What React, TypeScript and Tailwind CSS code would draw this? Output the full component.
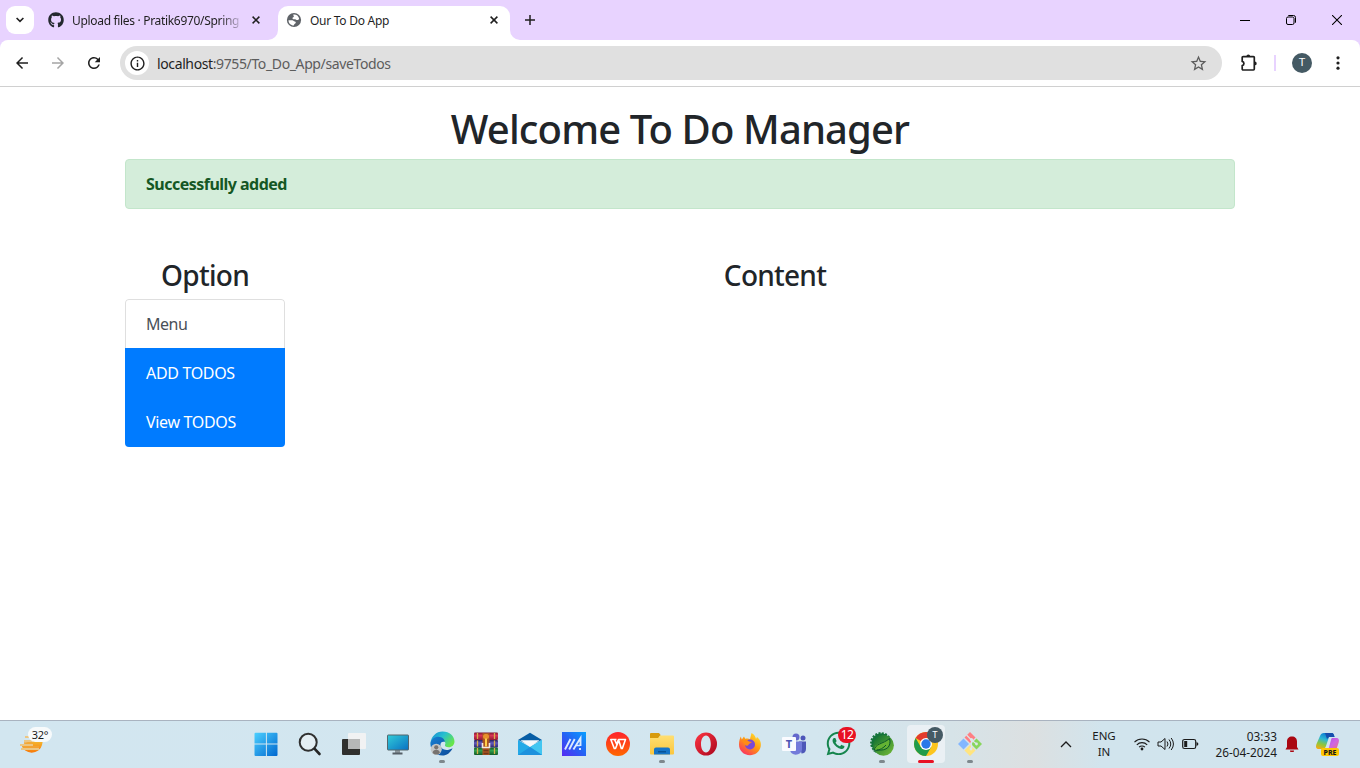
import React from "react";
import { MdArrowBack, MdArrowForward, MdRefresh, MdInfoOutline, MdStarBorder } from "react-icons/md";
import { FaGithub, FaWhatsapp } from "react-icons/fa";

function CloseMark() {
  return (
    <svg width="8" height="8" viewBox="0 0 8 8" className="shrink-0">
      <path d="M.6.6l6.8 6.8M7.4.6L.6 7.4" stroke="#1f1f1f" strokeWidth="1.5" />
    </svg>
  );
}

function TabStrip() {
  return (
    <div className="flex h-10 items-start bg-[#e8d3ff]">
      <div className="ml-1.5 mt-1.5 flex h-7 w-7 items-center justify-center rounded-[9px] bg-white">
        <svg width="8" height="6" viewBox="0 0 8 6">
          <path d="M.6 1L4 4.4 7.4 1" fill="none" stroke="#1f1f1f" strokeWidth="1.6" />
        </svg>
      </div>
      <div className="ml-[14px] flex h-10 w-[213px] items-center">
        <FaGithub size={16} color="#24292f" className="shrink-0" />
        <span className="ml-2 mt-px w-[171px] shrink-0 whitespace-nowrap text-[12px] tracking-[-0.32px] text-[#1f1f1f] [mask-image:linear-gradient(to_right,black_148px,transparent_172px)]">
          Upload files · Pratik6970/Spring
        </span>
        <span className="ml-[9px] flex"><CloseMark /></span>
      </div>
      <svg width="10" height="40" viewBox="0 0 10 40" className="ml-[7px] shrink-0">
        <path d="M0 40A10 10 0 0 0 10 30V40Z" fill="#fff" />
      </svg>
      <div className="mt-1.5 flex h-[34px] w-[232px] items-center rounded-t-[10px] bg-white pb-1.5 pl-2">
        <svg width="16" height="16" viewBox="0 0 16 16" className="shrink-0">
          <circle cx="8" cy="8" r="7.1" fill="#5f6368" />
          <path d="M7.300 2.600c2.700-.5 5.300 1.200 5.800 4-.2 1-.8 1.600-1.800 1.500-1 .1-1.300-.6-2.100-.9-.9-.2-2.500.2-2.700-.8-.2-.8.6-1.100 1.200-1.500.6-.5-.7-1.400-.4-2.300ZM2.500 8.200h3.800c1.300.1 1.500 1.200 2.500 1.400 1.200.2 1.300 1.200.5 1.800-.6.500-1.400.7-1.500 2.100C4.800 13.400 2.400 11 2.500 8.200Z" fill="#fff" />
        </svg>
        <span className="ml-2 mt-[2px] w-[180px] whitespace-nowrap text-[12px] tracking-[-0.27px] text-[#1f1f1f]">Our To Do App</span>
        <CloseMark />
      </div>
      <svg width="10" height="40" viewBox="0 0 10 40" className="shrink-0">
        <path d="M10 40A10 10 0 0 1 0 30V40Z" fill="#fff" />
      </svg>
      <svg width="10" height="10" viewBox="0 0 10 10" className="ml-[5px] mt-[15px]">
        <path d="M5 0v10M0 5h10" stroke="#1f1f1f" strokeWidth="1.5" />
      </svg>
      <div className="ml-auto flex h-10 items-center gap-[36px] pr-[18px]">
        <svg width="10" height="10" viewBox="0 0 10 10"><path d="M0 5.5h10" stroke="#000" /></svg>
        <svg width="10" height="10" viewBox="0 0 10 10">
          <rect x=".5" y="2" width="7.5" height="7.5" rx="1.5" fill="none" stroke="#000" />
          <path d="M2.3.5H7.5a2 2 0 0 1 2 2V7.7" fill="none" stroke="#000" />
        </svg>
        <svg width="10" height="10" viewBox="0 0 10 10"><path d="M0 0l10 10M10 0L0 10" stroke="#000" strokeWidth="1.05" /></svg>
      </div>
    </div>
  );
}

function Toolbar() {
  return (
    <div className="bg-[#e8d3ff]">
      <div className="flex h-[47px] items-center rounded-t-[8px] border-b border-[#d0d0d0] bg-white">
        <MdArrowBack size={18} color="#1f1f1f" className="ml-[13px]" />
        <MdArrowForward size={18} color="#a5a5a5" className="ml-[18px]" />
        <MdRefresh size={18} color="#1f1f1f" className="ml-[18px]" />
        <div className="ml-[17px] flex h-[34px] w-[1102px] items-center rounded-full bg-[#e0e0e0] pl-[5px]">
          <div className="flex h-6 w-6 items-center justify-center rounded-full bg-white">
            <MdInfoOutline size={17} color="#1f1f1f" />
          </div>
          <span className="ml-2 whitespace-nowrap text-[14px] tracking-[-0.38px] text-[#5c5c5c]">
            <span className="text-[#1f1f1f]">localhost</span>:9755/To_Do_App/saveTodos
          </span>
          <MdStarBorder size={19} color="#5c5c5c" className="ml-auto mr-[14px]" />
        </div>
        <svg width="18" height="18" viewBox="0 0 18 18" className="ml-[18px]">
          <path d="M2.2 3.600a.9.9 0 0 1 .9-.9H13.400a.9.9 0 0 1 .9.9V15.100a.9.9 0 0 1-.9.9H3.100a.9.9 0 0 1-.9-.9V11.600a2.200 2.200 0 0 0 0-4.300Z" fill="none" stroke="#1f1f1f" strokeWidth="1.7" />
          <path d="M6.400 2.400a1.900 1.900 0 0 1 3.800 0ZM14.800 7.500a1.900 1.900 0 0 1 0 3.800Z" fill="#1f1f1f" />
        </svg>
        <div className="ml-[16px] h-4 w-[2px] bg-[#e8d3ff]" />
        <div className="ml-4 flex h-5 w-5 items-center justify-center rounded-full bg-[#455a64] pt-px font-['Roboto',sans-serif] text-[11px] text-white">T</div>
        <svg width="4" height="14" viewBox="0 0 4 14" className="ml-[24px]">
          <circle cx="2" cy="1.8" r="1.6" fill="#1f1f1f" />
          <circle cx="2" cy="7" r="1.6" fill="#1f1f1f" />
          <circle cx="2" cy="12.2" r="1.6" fill="#1f1f1f" />
        </svg>
      </div>
    </div>
  );
}

function Content() {
  return (
    <main className="mx-auto w-[1110px] grow pt-4 text-[16px] leading-6 text-[#212529]">
      <h1 className="whitespace-nowrap pb-1.5 pt-[2px] text-center text-[40px] font-medium leading-[48px] tracking-[-0.88px]">Welcome To Do Manager</h1>
      <div className="h-[50px] rounded-[4px] border border-[#c3e6cb] bg-[#d4edda] px-5 py-3 text-[#155724]">
        <b className="tracking-[-0.52px]">Successfully added</b>
      </div>
      <div className="mt-12 flex gap-[30px]">
        <div className="w-40">
          <h3 className="pb-[7px] pt-px text-center text-[28px] font-medium leading-[34px] tracking-[-0.7px]">Option</h3>
          <div className="overflow-hidden rounded-[4px]">
            <div className="h-[49px] rounded-t-[4px] border border-b-0 border-[#dfdfdf] px-5 py-3 tracking-[-0.5px] text-[#495057]">Menu</div>
            <div className="h-[49px] bg-[#007bff] px-[21px] py-[13px] tracking-[-0.33px] text-white">ADD TODOS</div>
            <div className="h-[50px] bg-[#007bff] px-[21px] py-[13px] tracking-[-0.33px] text-white">View TODOS</div>
          </div>
        </div>
        <div className="grow">
          <h3 className="pt-px text-center text-[28px] font-medium leading-[34px] tracking-[-0.75px]">Content</h3>
        </div>
      </div>
    </main>
  );
}

const windows = (
  <svg width="24" height="24" viewBox="0 0 24 24">
    <defs><linearGradient id="win" x2="1" y2="1"><stop stopColor="#4cd0ff" /><stop offset="1" stopColor="#0067cf" /></linearGradient></defs>
    <path d="M1.5.8H11.9V11.6H.5V1.8a1 1 0 0 1 1-1ZM12.9.8H22.5a1 1 0 0 1 1 1V11.6H12.9ZM.5 12.6H11.9V24H1.5a1 1 0 0 1-1-1ZM12.9 12.6H23.5V23a1 1 0 0 1-1 1H12.9Z" fill="url(#win)" />
  </svg>
);
const search = (
  <svg width="24" height="24" viewBox="0 0 24 24">
    <circle cx="10.2" cy="10.300" r="8.5" fill="#e4eef3" stroke="#303030" strokeWidth="2" />
    <path d="M16.700 16.800L21.500 22" stroke="#252525" strokeWidth="2.6" strokeLinecap="round" />
  </svg>
);
const taskView = (
  <svg width="24" height="24" viewBox="0 0 24 24">
    <rect x="0" y="7" width="18" height="16" rx="1" fill="#30302e" />
    <rect x="6" y="1" width="18" height="16" rx="1" fill="#f1f2f3" />
    <path d="M6 7h12v10H6Z" fill="#b6b7b7" />
  </svg>
);
const monitor = (
  <svg width="24" height="24" viewBox="0 0 24 24">
    <defs><linearGradient id="mon" x2="1" y2="1"><stop stopColor="#32ccd8" /><stop offset="1" stopColor="#0870c3" /></linearGradient></defs>
    <path d="M9 18h5v3H9Z" fill="#8c969c" /><path d="M6.5 20.5h10v2h-10Z" fill="#555f67" />
    <rect x="1.5" y="3" width="21" height="15" rx=".6" fill="url(#mon)" stroke="#55666d" />
  </svg>
);
const edge = (
  <svg width="25" height="25" viewBox="0 0 24 24">
    <defs>
      <linearGradient id="e1" x2="1" y2=".6"><stop stopColor="#1686d5" /><stop offset=".5" stopColor="#27bfd0" /><stop offset="1" stopColor="#68e64b" /></linearGradient>
      <linearGradient id="e2" x2="1" y2="1"><stop stopColor="#167fd3" /><stop offset="1" stopColor="#0c4a99" /></linearGradient>
    </defs>
    <path d="M.5 11C1.500 5 6 .5 12 .5c7 0 11.500 4.500 11.500 9.500 0 3.300-2.300 5.500-5.700 5.500-2.400 0-3.900-.9-3.400-2.200.8-1.400.3-2.600-.6-3.500C11.800 7.700 9.500 7.500 7.500 8 4.500 8.700 2 10.500.700 13.500Z" fill="url(#e1)" />
    <path d="M.5 12c.4-4 4-6.500 7.500-6.500 3.900 0 6.400 2.700 6.200 5-2.500-.7-4.200.5-4.200 3 0 4 5.500 6.500 11.700 3C19.500 21 16 23.500 12 23.500 5 23.500 0 18 .5 12Z" fill="url(#e2)" />
    <circle cx="6" cy="17.500" r="5.300" fill="#c3c6c7" /><circle cx="6" cy="15.700" r="2" fill="#77736f" /><path d="M2.500 20.800c.2-3.700 6.800-3.700 7 0-1.700 2.400-5.300 2.400-7 0Z" fill="#77736f" />
  </svg>
);
const archive = (
  <svg width="24" height="24" viewBox="0 0 24 24">
    <defs>
      <linearGradient id="bk1" x2="0" y2="1"><stop stopColor="#7d1530" /><stop offset=".4" stopColor="#d93454" /><stop offset="1" stopColor="#8d1935" /></linearGradient>
      <linearGradient id="bk2" x2="0" y2="1"><stop stopColor="#25205e" /><stop offset=".4" stopColor="#625bc0" /><stop offset="1" stopColor="#2b266f" /></linearGradient>
      <linearGradient id="bk3" x2="0" y2="1"><stop stopColor="#10562a" /><stop offset=".4" stopColor="#2fa04c" /><stop offset="1" stopColor="#135b29" /></linearGradient>
    </defs>
    <rect x="0" y=".5" width="24" height="7.500" rx="1" fill="url(#bk1)" />
    <rect x="0" y="8" width="24" height="7.500" rx="1" fill="url(#bk2)" />
    <rect x="0" y="15.500" width="24" height="7.500" rx="1" fill="url(#bk3)" />
    <path d="M3.500 1v22M20.500 1v22" stroke="#d9b04a" strokeWidth="1.300" strokeDasharray="6 1.500" />
    <path d="M8.500 1h7v22h-7Z" fill="#a85520" />
    <rect x="9" y="2" width="6" height="5" rx="2.500" fill="#e8902c" />
    <path d="M8.500 11v4.500h7V11" fill="none" stroke="#f3e8e0" strokeWidth="1.600" />
    <path d="M12 6.500v8" stroke="#ffcf4a" strokeWidth="2" /><path d="M9.500 18.500h5M9.500 21.500h5" stroke="#70371d" strokeWidth="1.300" />
  </svg>
);
const mail = (
  <svg width="24" height="24" viewBox="0 0 24 24">
    <path d="M0 8L12 .8 24 8 12 13Z" fill="#075da5" />
    <path d="M0 8l12 7 12-7v15H0Z" fill="#24a9e7" /><path d="M12 15L24 8v15Z" fill="#43c6f1" /><path d="M0 23l12-8 12 8Z" fill="#1d91dd" />
    <path d="M2.500 8.300h19L12 14.800Z" fill="#f5f8fb" />
  </svg>
);
const msiApp = (
  <svg width="24" height="24" viewBox="0 0 24 24">
    <defs><linearGradient id="ms" y1="1" x2="1" y2="0"><stop stopColor="#562af3" /><stop offset=".5" stopColor="#2562f4" /><stop offset="1" stopColor="#079fff" /></linearGradient></defs>
    <path d="M0 0h24v24H0Z" fill="url(#ms)" />
    <path d="M3 17.500L8.500 7M7.200 17.500L12.700 7M11.400 17.500L18.500 6V14" fill="none" stroke="#dbeaff" strokeWidth="1.900" /><path d="M14 13.500h4" stroke="#dbeaff" strokeWidth="1.500" /><circle cx="18" cy="17" r="1.100" fill="#fff" />
  </svg>
);
const wps = (
  <svg width="24" height="24" viewBox="0 0 24 24">
    <defs><linearGradient id="wp" x2="0" y2="1"><stop stopColor="#ff242c" /><stop offset="1" stopColor="#ff6700" /></linearGradient></defs>
    <circle cx="12" cy="12" r="12" fill="url(#wp)" />
    <path d="M10.500 7.500H4.800L8.300 16.500H9.500L12.800 8.500 15.300 16.500H16.300L19.500 7.500H12.500L11 11M8.500 7.500L11 13" fill="none" stroke="#fff" strokeWidth="1.600" strokeLinejoin="round" />
  </svg>
);
const folder = (
  <svg width="24" height="24" viewBox="0 0 24 24">
    <defs><linearGradient id="fo" x2="0" y2="1"><stop stopColor="#ffdf72" /><stop offset="1" stopColor="#fbc63d" /></linearGradient></defs>
    <path d="M0 2a1 1 0 0 1 1-1h8l2 2.500H10L8 7H0Z" fill="#d79b0e" />
    <path d="M0 6h8l2.500-2.500H23a1 1 0 0 1 1 1V21.500a1 1 0 0 1-1 1H1a1 1 0 0 1-1-1Z" fill="url(#fo)" />
    <path d="M4 22.500V17.500a2 2 0 0 1 2-2H18a2 2 0 0 1 2 2V22.500Z" fill="#1675c7" /><path d="M8 19h8v1.500H8Z" fill="#075397" />
  </svg>
);
const opera = (
  <svg width="24" height="24" viewBox="0 0 24 24">
    <defs><linearGradient id="op" x2="1" y2="1"><stop stopColor="#ff3542" /><stop offset="1" stopColor="#a8061d" /></linearGradient></defs>
    <path fillRule="evenodd" d="M12 .500a11 11.500 0 1 0 0 23 11 11.500 0 1 0 0-23ZM12 3.500c3 0 4.800 3.800 4.800 8.500S15 20.500 12 20.500 7 16.700 7 12s2-8.500 5-8.500Z" fill="url(#op)" />
  </svg>
);
const firefox = (
  <svg width="24" height="24" viewBox="0 0 24 24">
    <defs><linearGradient id="ff" x1=".9" x2=".2" y2="1"><stop stopColor="#ffe735" /><stop offset=".5" stopColor="#ff980f" /><stop offset="1" stopColor="#fb2b67" /></linearGradient></defs>
    <path d="M2.800 4.500l1 3L6 4.500l1.200 2.300c2-.5 3.300-.4 4.800.3L13.500 1c3 1.700 4 3.800 4.500 6l1-2c3 2.300 4.500 6 3.700 9.500C21.500 20 17 23.200 12 23.200 5.500 23.200 1 18.500 1 12.500 1 9 2 6 2.800 4.500Z" fill="url(#ff)" />
    <circle cx="12" cy="12.500" r="5" fill="#7949d5" /><path d="M4 9c3-2 5-1.200 7 .5l3 .5-3 2c-1 2.600-4 2-4.500 0" fill="#ff8b16" />
  </svg>
);
const teams = (
  <svg width="24" height="24" viewBox="0 0 24 24">
    <circle cx="14" cy="5" r="3.500" fill="#6568cc" /><circle cx="21" cy="6" r="2.500" fill="#4d55b9" />
    <path d="M17 9.500h7v7.500c0 3-2.200 4.500-4.500 4.500Z" fill="#4e58b8" /><path d="M8 9.500h12V17c0 7-12 8-12 0Z" fill="#737bda" />
    <rect y="5" width="14" height="14" rx="1" fill="#fafbff" /><text x="7" y="16" textAnchor="middle" fontSize="11" fontWeight="700" fill="#4e55b4">T</text>
  </svg>
);
const whatsapp = <FaWhatsapp size={27} color="#15854d" />;
const spring = (
  <svg width="24" height="24" viewBox="0 0 24 24">
    <defs><linearGradient id="sp" x2="1" y2="1"><stop stopColor="#096b31" /><stop offset="1" stopColor="#77bd37" /></linearGradient></defs>
    <circle cx="11" cy="11" r="9.700" fill="#15743a" stroke="#15743a" strokeWidth="2.400" strokeDasharray="2 1.300" />
    <circle cx="13.500" cy="13.300" r="10.400" fill="url(#sp)" />
    <path d="M4.500 17C4 11 13 12 19.500 6.500c2 8-2.500 12.500-13 11.500Z" fill="#63b233" />
    <path d="M4 19.500C4.500 11 13 12.500 19.500 6.500c2 8-2.500 12.500-12.500 11.500M5.500 18.500c4.500-.5 8-2.500 10.500-5.500" fill="none" stroke="#0b5a2b" strokeWidth="1" />
  </svg>
);
const chrome = (
  <svg width="24" height="24" viewBox="0 0 24 24">
    <circle cx="12" cy="12" r="12" fill="#fcc51e" />
    <path d="M12 12L1.610 6A12 12 0 0 1 22.390 6H12Z" fill="#e33b2e" />
    <path d="M1.610 6A12 12 0 0 0 12 24L17.200 15H6.800Z" fill="#219b4a" />
    <circle cx="12" cy="12" r="6" fill="#fff" /><circle cx="12" cy="12" r="4.700" fill="#2878e8" />
  </svg>
);
const git = (
  <svg width="24" height="24" viewBox="0 0 24 24">
    <path d="M12 0l5.500 5.500L12 11 6.500 5.500Z" fill="#ff7f83" /><path d="M18.500 6.500L24 12l-5.500 5.500L13 12Z" fill="#88d65c" />
    <path d="M12 13l5.500 5.500L12 24l-5.500-5.500Z" fill="#ffe47f" /><path d="M5.500 6.500L11 12l-5.500 5.500L0 12Z" fill="#83b7ff" />
    <path d="M8.500 3l5 5v9M13.500 8l5 4" fill="none" stroke="#dce7eb" strokeWidth="1.200" /><circle cx="13.500" cy="7.500" r="1.600" fill="#dce7eb" /><circle cx="18.500" cy="12" r="1.400" fill="#dce7eb" /><circle cx="13" cy="17" r="1.400" fill="#dce7eb" />
  </svg>
);

type App = { name: string; icon: React.ReactNode; open?: boolean; active?: boolean; badge?: React.ReactNode };
const apps: App[] = [
  { name: "start", icon: windows },
  { name: "search", icon: search },
  { name: "views", icon: taskView },
  { name: "monitor", icon: monitor },
  { name: "edge", icon: edge, open: true },
  { name: "archive", icon: archive },
  { name: "mail", icon: mail },
  { name: "msi", icon: msiApp },
  { name: "wps", icon: wps },
  { name: "folder", icon: folder, open: true },
  { name: "opera", icon: opera },
  { name: "firefox", icon: firefox },
  { name: "teams", icon: teams },
  { name: "whatsapp", icon: whatsapp, badge: <span className="absolute left-[22px] top-[6px] flex h-4 w-[18px] items-center justify-center rounded-full bg-[#e81123] text-[12px] leading-none tracking-[-0.5px] text-white">12</span> },
  { name: "spring", icon: spring, open: true },
  { name: "chrome", icon: chrome, active: true, badge: <span className="absolute left-[23px] top-[6px] flex h-4 w-4 items-center justify-center rounded-full bg-[#455a64] pt-px font-['Roboto',sans-serif] text-[9px] text-white">T</span> },
  { name: "git", icon: git, open: true },
];

function Taskbar() {
  return (
    <footer className="flex h-12 items-stretch border-t border-[#a9b3c0] bg-[linear-gradient(90deg,#d2e6f0_0%,#d3e6ef_60%,#d6e3e8_70%,#dce0e1_76%,#d1e4ed_81%,#d1e4ee_100%)] text-[#1b1b1b]">
      <div className="relative ml-5 mt-[6px] h-8 w-8">
        <svg width="32" height="30" viewBox="0 0 32 30">
          <defs><linearGradient id="sun" x2="0" y2="1"><stop stopColor="#f4bd32" /><stop offset="1" stopColor="#f77a0b" /></linearGradient></defs>
          <path d="M1.500 18a10.500 9.800 0 0 0 20.500 0L23 13H12Z" fill="url(#sun)" />
          <path d="M5 10h6M4 14h9M0 18h13M1 22h18" stroke="#ecc683" strokeWidth="1.800" />
          <path d="M4 16h8M3 20h16" stroke="#f2a63a" strokeWidth="1.400" />
        </svg>
        <span className="absolute left-2 top-0 flex h-[15px] w-6 items-center justify-center rounded-full bg-[#f7fafb] text-[11px] leading-none tracking-[-0.2px]">32°</span>
      </div>
      <div className="ml-[192px] flex">
        {apps.map((app) => (
          <div key={app.name} className="relative flex w-11 flex-col items-center">
            <div className={app.active ? "mt-1 flex h-[38px] w-[38px] items-center justify-center rounded bg-[#eaf0f4] pb-px" : "mt-1 flex h-[38px] w-[38px] items-center justify-center pb-px"}>
              {app.icon}
            </div>
            {app.badge}
            {app.open && <div className="-mt-[3px] h-[3px] w-[6px] rounded-full bg-[#7e888d]" />}
            {app.active && <div className="-mt-[3px] h-[3px] w-4 rounded-full bg-[#e81123]" />}
          </div>
        ))}
      </div>
      <div className="ml-auto flex items-center pb-px">
        <svg width="12" height="7" viewBox="0 0 12 7"><path d="M1 6l5-5 5 5" fill="none" stroke="#1b1b1b" strokeWidth="1.300" /></svg>
        <div className="ml-5 w-6 text-center text-[11.500px] leading-4">ENG<br />IN</div>
        <svg width="18" height="16" viewBox="0 0 18 16" className="ml-[17px]">
          <path d="M1.500 6.200a10.500 10.500 0 0 1 15 0M3.800 8.800a7.300 7.300 0 0 1 10.400 0M6.100 11.200a4 4 0 0 1 5.800 0" fill="none" stroke="#1b1b1b" strokeWidth="1.100" />
          <circle cx="9" cy="13" r="1.400" fill="#1b1b1b" />
        </svg>
        <svg width="18" height="16" viewBox="0 0 18 16" className="ml-[6px]">
          <path d="M1 6h3l4-3.500v11L4 10H1Z" fill="none" stroke="#1b1b1b" strokeLinejoin="round" />
          <path d="M10 5.500q2 2.500 0 5M12 3.500q3.500 4.500 0 9M14.200 2q4.500 6 0 12" fill="none" stroke="#1b1b1b" />
        </svg>
        <svg width="17" height="12" viewBox="0 0 17 12" className="ml-[7px]">
          <rect x=".700" y="1.500" width="13" height="9" rx="1.800" fill="none" stroke="#1b1b1b" strokeWidth="1.200" /><path d="M2.200 3h3v6h-3ZM14.500 4l1.700 1v2l-1.700 1Z" fill="#1b1b1b" />
        </svg>
        <div className="ml-[12px] w-[66px] whitespace-nowrap text-right text-[11.800px] leading-4">03:33<br />26-04-2024</div>
        <svg width="14" height="16" viewBox="0 0 14 16" className="ml-2">
          <path d="M2 11V5.500C2 2.500 4 .500 7 .500s5 2 5 5V11l1.500 2.500H.500ZM5 14.500h4a2 2 0 0 1-4 0Z" fill="#aa0711" />
        </svg>
        <svg width="26" height="26" viewBox="0 0 26 26" className="ml-[16px] mr-[19px]">
          <defs>
            <linearGradient id="cp1" x1=".6" x2=".2" y2="1"><stop stopColor="#0875d1" /><stop offset=".4" stopColor="#2db8d4" /><stop offset=".7" stopColor="#8dc63d" /><stop offset="1" stopColor="#f2ac14" /></linearGradient>
            <linearGradient id="cp2" x2="1" y2="1"><stop stopColor="#a44fe5" /><stop offset=".5" stopColor="#cf66e2" /><stop offset="1" stopColor="#f57461" /></linearGradient>
          </defs>
          <path d="M9 2h7.500c2 0 2.500 2 3 4H14l-3 9c-.7 2-1.500 3-3.500 3H4c-3 0-3.500-2-2.500-5L5 5c.7-2 2-3 4-3Z" fill="url(#cp1)" />
          <path d="M17 7h4c3 0 3.500 2 2.500 5l-2 6c-.7 2-2 3-4 3H10c2 0 3-1 3.500-3L16 9c.3-1 .500-2 1-2Z" fill="url(#cp2)" />
          <path d="M10 2h7c1.500 0 2 2 2.500 4H14l-2 2Z" fill="#164fad" />
          <rect x="6" y="17" width="18" height="8" rx="2" fill="#ffc600" />
          <text x="15" y="23.600" textAnchor="middle" fontSize="7" fontWeight="800" fill="#171717">PRE</text>
        </svg>
      </div>
    </footer>
  );
}

export default function App() {
  return (
    <div className="flex h-[768px] w-[1360px] flex-col overflow-hidden bg-white font-['Noto_Sans','Open_Sans',sans-serif]">
      <TabStrip />
      <Toolbar />
      <Content />
      <Taskbar />
    </div>
  );
}
